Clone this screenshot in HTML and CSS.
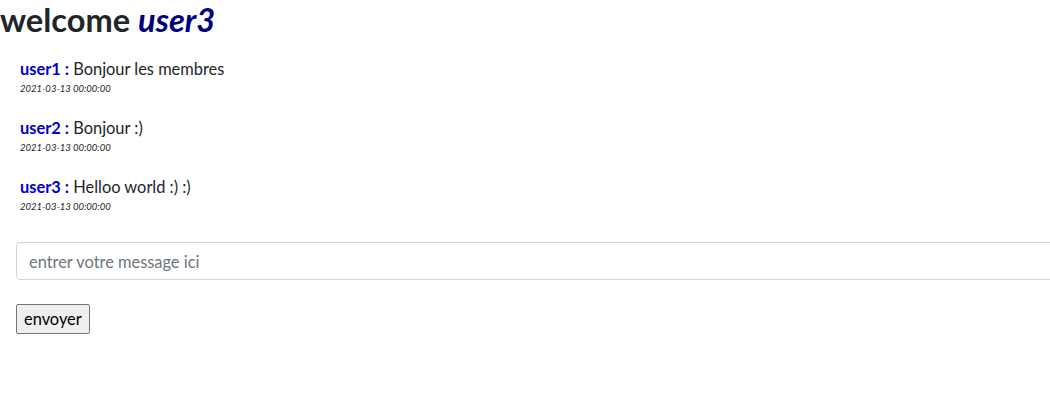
FILE: index.html
```html
<!DOCTYPE html>
<html lang="fr">
<head>
<meta charset="utf-8">
<title>chat</title>
<link rel="stylesheet" href="styles.css">
</head>
<body>
<h1 class="welcome">welcome <i class="me">user3</i></h1>
<div class="messages">
  <div class="msg">
    <div class="line"><b class="author">user1 :</b> Bonjour les membres</div>
    <div class="date">2021-03-13 00:00:00</div>
  </div>
  <div class="msg">
    <div class="line"><b class="author">user2 :</b> Bonjour :)</div>
    <div class="date">2021-03-13 00:00:00</div>
  </div>
  <div class="msg">
    <div class="line"><b class="author">user3 :</b> Helloo world :) :)</div>
    <div class="date">2021-03-13 00:00:00</div>
  </div>
</div>
<form class="send">
  <input class="field" type="text" placeholder="entrer votre message ici">
  <button class="btn" type="button">envoyer</button>
</form>
</body>
</html>
```

FILE: styles.css
```css
html { overflow-x: hidden; }
body {
  margin: 0;
  font-family: Lato, "Noto Sans", sans-serif;
  font-size: 16px;
  line-height: 1.5;
  color: #212529;
  background: #fff;
}
.welcome {
  margin: 0 0 8px 0;
  font-size: 32.6px;
  font-weight: 700;
  line-height: 40px;
}
.me { color: #000080; }
.messages {
  padding: 9px 0 0 20px;
}
.msg { margin-bottom: 20px; }
.line { line-height: 24px; font-size: 16.4px; }
.author { color: #0000cd; font-weight: 700; }
.date {
  font-size: 9.5px;
  font-style: italic;
  line-height: 15px;
}
.send {
  padding: 8px 0 0 16px;
}
.field {
  display: block;
  width: calc(100% + 20px);
  height: 38px;
  box-sizing: border-box;
  padding: 6px 12px;
  font: inherit;
  font-size: 16.4px;
  color: #495057;
  border: 1px solid #ced4da;
  border-radius: 4px;
  margin: 0 0 24px 0;
}
.field::placeholder { color: #6c757d; }
.btn {
  font: inherit;
  font-size: 16.4px;
  line-height: 24px;
  height: 30px;
  padding: 1px 7px;
  color: #000;
  background: #efefef;
  border: 1px solid #767676;
  border-radius: 2px;
}
```
